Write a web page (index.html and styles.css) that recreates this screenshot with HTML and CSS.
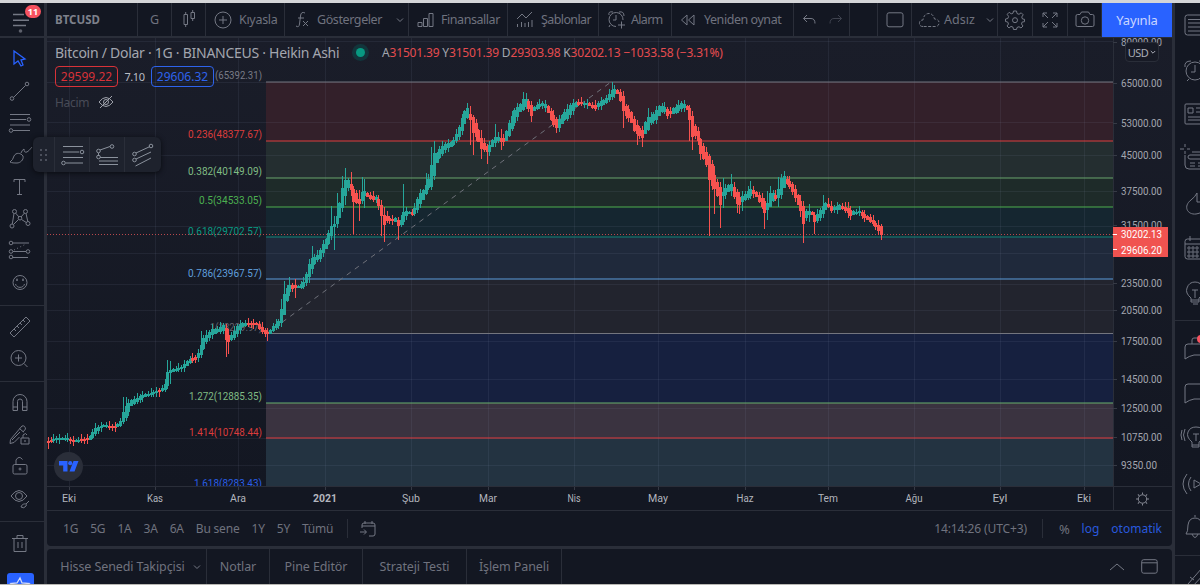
FILE: index.html
```html
<!DOCTYPE html>
<html lang="tr">
<head>
<meta charset="utf-8">
<title>BTCUSD</title>
<link rel="stylesheet" href="styles.css">
</head>
<body>
<div class="app">
  <aside class="rail">
    <div class="menu">
      <svg width="44" height="34" viewBox="0 3 44 34"><path class="thick" d="M13 14.500h11M13 20.300h16M13 25.500h13"/><circle class="dot" cx="20.500" cy="31" r="1.800"/></svg>
      <span class="badge">11</span>
    </div>
    <div class="tools first">
      <svg class="active" viewBox="0 0 28 28"><path d="M8 6v13l4-3 3 5 2-1-2-5 4-1z"/></svg>
      <svg viewBox="0 0 28 28"><path d="M7.500 20.500 19.500 8.500"/><circle cx="6" cy="21.500" r="1.800"/><circle cx="21" cy="7" r="1.800"/></svg>
      <svg viewBox="0 0 28 28"><path d="M4 5.500h20M4 10.500h16M4 16h20M7 21.500h17"/><circle cx="23" cy="10.500" r="1.800"/><circle cx="5" cy="21.500" r="1.800"/></svg>
      <svg viewBox="0 0 28 28"><path d="M4 21q3-2 4-6c2-4 7-3 9 0 1 4-3 7-6 7-3 0-5 0-7-1zM15 12q1-3 3-4 0 4 3 3 2-1 5-5"/></svg>
      <svg viewBox="0 0 28 28"><path d="M8 9V6.500h11V9M13.500 6.500V21.500M11 21.500h5"/></svg>
      <svg viewBox="0 0 28 28"><path d="M6.300 19 8 8.500M9.500 8l3.500 4M15 12l3.500-4M20 8.500 21.800 16.500M7.500 19.500l5-5M15.500 14.500l4.800 3"/><circle cx="6" cy="21" r="2"/><circle cx="8.500" cy="6.500" r="2"/><circle cx="14" cy="13.200" r="1.800"/><circle cx="19.500" cy="6.500" r="2"/><circle cx="22" cy="18.500" r="2"/></svg>
      <svg viewBox="0 0 28 28"><path d="M7 6h16M7 14.500h13M7 20.500h15"/><path stroke-dasharray="1 2.500" d="M8 13 20 7"/><circle cx="5" cy="6" r="1.800"/><circle cx="5" cy="14.500" r="1.800"/><circle cx="22" cy="14.500" r="1.800"/><circle cx="5" cy="20" r="1.800"/></svg>
      <svg viewBox="0 0 28 28"><circle cx="14" cy="13.500" r="7"/><path d="M9.500 15c1 4.500 8 4.500 9 0M11 9.500v2.500M17 9.500v2.500M10 11h2M16 11h2"/></svg>
    </div>
    <div class="tools second">
      <svg viewBox="0 0 28 28"><path d="m4 20 16-16 4 4L8 24zM8 16l2 2M11 13l2 2M14 10l2 2M17 7l2 2"/></svg>
      <svg viewBox="0 0 28 28"><circle cx="12.500" cy="13" r="7.500"/><path d="M9 13h7M12.500 9.500v7M18 18.500l3.500 3.500"/></svg>
    </div>
    <div class="tools third">
      <svg viewBox="0 0 28 28"><path d="M7 21.500v-9a7 7 0 0 1 14 0v9h-4.500v-9a2.500 2.500 0 0 0-5 0v9zM7 18h4.500M16.500 18H21"/></svg>
      <svg viewBox="0 0 28 28"><path d="M13.500 16 8 21.500l-4 1 .5-4L16 5q3-1 3.500 3L17 11M13.500 7.500l4 3.500M6 19l8-8M15 17h8v6h-8zM17 17v-3q3-3 4 0"/><circle cx="19" cy="20" r=".5"/></svg>
      <svg viewBox="0 0 28 28"><path d="M8.500 11.500h11q1.500 0 1.500 1.500v6.500q0 1.500-1.500 1.500h-11Q7 21 7 19.500V13q0-1.500 1.500-1.500zM10 11.500V7q3-5 6.500-.5"/><circle cx="14" cy="16" r="1"/></svg>
      <svg viewBox="0 0 28 28"><path d="M5 11q8-11 16 0q-8 11-16 0zM15 22c1-4 7-4 5-1q-2 3-5 1M20 19l3-3"/><circle cx="13" cy="11" r="3.500"/></svg>
    </div>
    <div class="tools fourth">
      <svg viewBox="0 0 28 28"><path d="M6 8.500h16M11 8V5.500h6V8M8 8.500v13h12v-13M12 12v6M16 12v6"/></svg>
    </div>
    <div class="star"><svg width="26" height="24" viewBox="0 0 26 24"><path d="m13 5 2 5 7 .5-5 4 2 6-6-3-6 3 2-6-5-4 6-.5z"/></svg></div>
  </aside>

  <main class="main">
    <header class="topbar">
      <div class="cell w91 symbol">BTCUSD</div>
      <div class="cell w34 mid">G</div>
      <div class="cell w34 mid"><svg width="18" height="22" viewBox="0 0 18 22"><path d="M4 5.500h3.500v10H4zM5.700 3v2.500M5.700 15.500V18M11 3.500h3.500v6H11zM12.700 1v2.500M12.700 9.500V12"/></svg></div>
      <div class="cell w79"><svg width="18" height="18" viewBox="0 0 18 18"><circle cx="9" cy="9" r="8"/><path d="M5 9h8M9 5v8"/></svg><span class="t-compare">Kıyasla</span></div>
      <div class="cell w124 ind"><svg width="16" height="20" viewBox="0 0 16 20"><path d="M10 3Q6 1 5.500 6L4.500 14Q4 18 1 16M3 8h6M8 11l5 5M13 11l-5 5"/></svg><span class="t-ind">Göstergeler</span><svg class="chev" width="8" height="6" viewBox="0 0 8 6"><path d="m1 1.500 3 3 3-3"/></svg></div>
      <div class="cell w99"><svg width="18" height="16" viewBox="0 0 18 16"><path d="M1 10.500h4v4H1zM6.500 6.500h4v8h-4zM12 1.500h4v13h-4z"/></svg><span class="t-fin">Finansallar</span></div>
      <div class="cell w91"><svg width="18" height="18" viewBox="0 0 18 18"><path d="m1 8 5-5 4 4 6-6M1.500 13v3M5.500 11v5M9 12v4M12.500 11v5M16 9v7"/></svg><span class="t-tpl">Şablonlar</span></div>
      <div class="cell w73"><svg width="20" height="20" viewBox="0 0 20 20"><path d="M9 16.500A7 7 0 1 1 16 10M9 5v5H6M2 5q-1-4 4-3M12 2q5-1 5 4M3 15l-1 2M14.500 11.500v7M11 15h7"/></svg><span class="t-alarm">Alarm</span></div>
      <div class="cell w122"><svg width="16" height="14" viewBox="0 0 16 14"><path d="M7 2v10L1.500 7zM14 2v10L8.500 7z"/></svg><span class="t-replay">Yeniden oynat</span></div>
      <div class="cell w56"><svg width="14" height="12" viewBox="0 0 14 12"><path d="M5 1 1.500 4.500 5 8M1.500 4.500H9q4 0 4 5"/></svg><svg class="redo" width="14" height="12" viewBox="0 0 14 12"><path d="M9 1l3.500 3.500L9 8M12.500 4.500H5q-4 0-4 5"/></svg></div>
      <div class="cell w28"></div>
      <div class="cell w34 mid"><svg width="18" height="16" viewBox="0 0 18 16"><rect x="1" y=".8" width="16" height="14" rx="2"/></svg></div>
      <div class="cell w86 cloud"><svg width="22" height="16" viewBox="0 0 22 16"><path stroke-dasharray="3 1.500" d="M5 14.500Q1 14.500 1.500 10.500 2 8 5 8 6 1.500 11 1.500q4 0 5.500 5.500 5 .5 4.500 4.500-.5 3-4 3z"/></svg><span class="t-name">Adsız</span><svg class="chev" width="8" height="6" viewBox="0 0 8 6"><path d="m1 1.500 3 3 3-3"/></svg></div>
      <div class="cell w35 mid"><svg width="20" height="20" viewBox="0 0 20 20"><path d="m8.500 1h3l.5 2.500 2 .8 2.200-1.500 2 2L16.700 7l.8 2 2 .3v2.400l-2.300.3-.7 2 1.500 2-2 2-2-1.300-2 .8-.5 2h-3L8 17.200l-2-.8L4 18l-2-2 1.500-2-.8-2-2.200-.5V9l2.300-.5.8-2L2.200 4.300l2-2 2 1.500L8 3.200z"/><circle cx="10" cy="10.200" r="2.500"/></svg></div>
      <div class="cell w35 mid"><svg width="16" height="16" viewBox="0 0 16 16"><path d="M1 5V1h4M1 1l5 5M11 1h4v4M15 1l-5 5M1 11v4h4M1 15l5-5M15 11v4h-4M15 15l-5-5"/></svg></div>
      <div class="cell w34 mid"><svg width="20" height="17" viewBox="0 0 20 17"><path d="M2.500 3.500H5L6.500 1h7L15 3.500h2.500q1.500 0 1.500 1.500v9q0 1.500-1.500 1.500h-15Q1 15.500 1 14V5q0-1.500 1.500-1.500z"/><circle cx="10" cy="9.500" r="3.700"/></svg></div>
      <div class="publish">Yayınla</div>
    </header>

    <section class="chart">
      <svg id="plot" class="plot" width="1125" height="473" viewBox="47 38 1125 473"></svg>
      <div class="legend">
        <div class="row"><span class="title">Bitcoin / Dolar · 1G · BINANCEUS · Heikin Ashi</span><span class="status"></span><span class="ohlc"><b>A</b>31501.39 <b>Y</b>31501.39 <b>D</b>29303.98 <b>K</b>30202.13 −1033.58 (−3.31%)</span></div>
        <div class="row quotes"><span class="pill sell">29599.22</span><span class="spread">7.10</span><span class="pill buy">29606.32</span></div>
        <div class="row volume"><span>Hacim</span><svg width="16" height="14" viewBox="0 0 16 14"><path d="M1 7q7-9 14 0-7 9-14 0zM2 13 14 1"/><circle cx="8" cy="7" r="2.500"/></svg></div>
      </div>
      <div class="currency">USD<svg width="6" height="5" viewBox="0 0 6 5"><path d="m.8 1 2.200 2.200L5.200 1"/></svg></div>
      <div class="floating">
        <div class="grip"><i></i><i></i><i></i><i></i><i></i><i></i></div>
        <div><svg viewBox="0 0 28 28"><path d="M5 5.500h20M5 11h16M5 16.500h20M8 22h17"/><circle cx="24" cy="11" r="1.800"/><circle cx="5.500" cy="22" r="1.800"/></svg></div>
        <div><svg viewBox="0 0 28 28"><path d="m7 9 10-3.500M5.500 12v3M7 16.500h18M6 20h19M6 23.500h19"/><circle cx="19" cy="5.500" r="1.800"/><circle cx="5.500" cy="10" r="1.800"/><circle cx="5.500" cy="16" r="1.800"/></svg></div>
        <div><svg viewBox="0 0 28 28"><path d="M7 12 21 5.500M7 18l15-7M6.500 25 22 17"/><circle cx="5.500" cy="13" r="1.800"/><circle cx="22" cy="5" r="1.800"/><circle cx="5.500" cy="19" r="1.800"/></svg></div>
      </div>
      <div class="brand"><svg width="20" height="11" viewBox="0 0 20 11"><path d="M0 0h8.500v10.500h-4.300V4.500H0zM14.500 0H19.500L15.500 10.500H10.500z"/><circle cx="11.200" cy="2.200" r="2.100"/></svg></div>
    </section>

    <div class="ranges">
      <span>1G</span><span>5G</span><span>1A</span><span>3A</span><span>6A</span><span class="ytd">Bu sene</span><span>1Y</span><span>5Y</span><span class="all">Tümü</span>
      <i class="bar after-all"></i>
      <svg width="16" height="16" viewBox="0 0 16 16"><path d="M2 7V4q0-2 2-2h9q2 0 2 2v9q0 2-2 2H9M2 5h13M5 0v3M12 0v3M0 11h6M4 8.500 6.500 11 4 13.500"/></svg>
      <span class="clock">14:14:26 (UTC+3)</span><i class="bar"></i><span class="pct">%</span><span class="blue log">log</span><span class="blue auto">otomatik</span>
    </div>

    <footer class="tabs">
      <div class="tab t1">Hisse Senedi Takipçisi<svg width="8" height="6" viewBox="0 0 8 6"><path d="m1 1.500 3 3 3-3"/></svg></div>
      <div class="tab t2">Notlar</div>
      <div class="tab t3">Pine Editör</div>
      <div class="tab t4">Strateji Testi</div>
      <div class="tab t5">İşlem Paneli</div>
      <div class="tabend"><svg width="16" height="8" viewBox="0 0 16 8"><path d="M1 7 8 1l7 6"/></svg><svg width="17" height="15" viewBox="0 0 17 15"><rect x=".7" y=".7" width="15.500" height="13.500" rx="2"/><path d="M1 3.800h15"/></svg></div>
    </footer>
  </main>

  <aside class="side">
    <div class="slots upper">
      <svg viewBox="0 0 32 32"><rect x="5" y="5" width="22" height="20" rx="2.500"/><path d="M8 9.500h16M8 13h16M8 17h16M8 21h16"/></svg>
      <svg viewBox="0 0 32 32"><circle cx="15" cy="16" r="9"/><path d="M15 10v7h-4M5 12q-1-6 6-6M19 6q7 0 6 6M9 24l-2 2"/></svg>
      <svg viewBox="0 0 32 32"><rect x="5" y="5" width="22" height="20" rx="1"/><path d="M8 9h5v5H8zM16 9h8M16 13h8M8 18h16M8 21h16"/></svg>
      <svg viewBox="0 0 32 32"><path d="M5 11v10q0 4 4 4h16M0 5h4M7 5h3M5 0v3M5 7v3M12 8h13M8 13q0-2 2-2h15M8 13q0 2 2 2h15M10 19h5M18 19h6M10 22h5M18 22h6"/></svg>
      <svg viewBox="0 0 32 32"><path d="M17 5q-2 4-6 7c-8 6-4 15 5 14s11-9 5-15M17 5v9h6"/></svg>
      <svg viewBox="0 0 32 32"><rect x="5" y="6" width="22" height="20" rx="2.500"/><path d="M5 11h20M10 3v5"/><circle cx="9" cy="15" r="1.200"/><circle cx="13" cy="15" r="1.200"/><circle cx="17" cy="15" r="1.200"/><circle cx="9" cy="19" r="1.200"/><circle cx="13" cy="19" r="1.200"/><circle cx="17" cy="19" r="1.200"/><circle cx="9" cy="23" r="1.200"/><circle cx="13" cy="23" r="1.200"/><circle cx="17" cy="23" r="1.200"/></svg>
      <svg viewBox="0 0 32 32"><path d="M11 20Q5 15 7 10q2-6 8-6t8 6q2 5-4 10v4h-8zM11 22h8M13 26h5M12 12h6M15 12v8"/></svg>
    </div>
    <div class="slots lower">
      <svg viewBox="0 0 32 32"><path d="M12 10V6q0-2 2-2h12M5 25V13q0-3 3-3h18v11H14q-5 1-9 4z"/><circle class="alert" cx="21" cy="5" r="4"/></svg>
      <svg viewBox="0 0 32 32"><path d="M5 24V8q0-3 3-3h18v15H14q-5 1-9 4z"/></svg>
      <svg viewBox="0 0 32 32"><path d="M12 19Q6 14 8 9q2-5 8-5 7 0 9 6 1 5-6 9v5h-7zM12 22h7M16 11v7M13 11h6M5 6q-3 6 0 12M2 7q-2 5 0 10"/></svg>
      <svg viewBox="0 0 32 32"><path d="M7 6q-8 10 0 20M11 9q-5 7 0 14M14 12v8l7-4z"/></svg>
      <svg viewBox="0 0 32 32"><path d="M6 22q2-2 2-9 1-7 7-7t7 7q0 7 3 9zM12 22q3 7 6 0M14 4h2"/></svg>
    </div>
    <div class="slots last"><svg viewBox="0 0 32 32"><path d="m8 24 14-16 4 4-14 15M10 17l4 3"/></svg></div>
  </aside>
</div>
<script src="chart.js"></script>
</body>
</html>
```

FILE: styles.css
```css
* { box-sizing: border-box; }
body {
  margin: 0; width: 1200px; height: 585px; overflow: hidden;
  background: #131722; color: #6f727e;
  font-family: "Noto Sans", "Open Sans", sans-serif; font-size: 12.500px;
}
svg { fill: none; stroke: #747884; stroke-width: 1; flex: none; }
.app {
  display: grid; grid-template-columns: 44px 1125px 25px; column-gap: 3px;
  width: 1200px; height: 585px; overflow: hidden;
  background: #2a2e39; border-top: 3px solid #d4d5d8; border-bottom: 1px solid #b9b8b4;
}

.rail { background: #131722; display: flex; flex-direction: column; overflow: hidden; }
.menu { position: relative; height: 35px; border-bottom: 2px solid #2a2e39; flex: none; }
.thick { stroke-width: 1.500; }
.dot { fill: #5d606b; stroke: none; }
.badge {
  position: absolute; left: 25px; top: 2px; width: 16px; height: 13px; border-radius: 7px;
  background: #f7525f; color: #fff; font-size: 9px; font-weight: 700; line-height: 13px; text-align: center;
}
.tools { display: flex; flex-direction: column; align-items: center; padding-right: 4px; flex: none; }
.tools svg { width: 28px; height: 28px; margin: 2px 0; }
.tools .active { stroke: #2962ff; stroke-width: 1.300; }
.first { padding-top: 5px; height: 267px; }
.second { border-top: 1px solid #2a2e39; padding-top: 5px; height: 76px; }
.third { border-top: 1px solid #2a2e39; padding-top: 5px; height: 140px; }
.fourth { border-top: 1px solid #2a2e39; padding-top: 6px; height: 52px; }
.star { width: 27px; height: 24px; margin-left: 7px; background: #2962ff; border-radius: 3px; flex: none; }
.star svg { stroke: #d5dcf5; stroke-width: 1.300; }

.main { display: flex; flex-direction: column; min-width: 0; }
.topbar { display: flex; height: 35px; background: #131722; border-bottom: 2px solid #2a2e39; flex: none; }
.cell { display: flex; align-items: center; gap: 8px; padding-left: 8px; border-right: 1px solid #2a2e39; white-space: nowrap; flex: none; }
.cell.mid { justify-content: center; padding: 0; }
.w91 { width: 91px; } .w34 { width: 34px; } .w79 { width: 79px; } .w124 { width: 124px; }
.w99 { width: 99px; } .w73 { width: 73px; } .w122 { width: 122px; } .w56 { width: 56px; }
.w28 { width: 28px; } .w86 { width: 86px; } .w35 { width: 35px; }
.symbol { font-weight: 700; font-size: 11.500px; color: #7d808b; }
.t-compare { margin-left: -1px; letter-spacing: -.3px; }
.ind { gap: 6px; padding-left: 10px; }
.t-ind { letter-spacing: -.4px; }
.ind .chev { margin-left: 8px; }
.t-fin { margin-left: -2px; letter-spacing: -.45px; }
.t-tpl { margin-left: -1px; letter-spacing: -.6px; }
.t-alarm { margin-left: -4px; letter-spacing: -.7px; }
.t-replay { letter-spacing: -.45px; }
.redo { opacity: .45; margin-left: 5px; }
.cloud { gap: 4px; padding-left: 6px; }
.cloud .chev { margin-left: 7px; }
.publish { flex: 1; height: 34px; background: #2962ff; color: #c9d6ff; display: flex; align-items: center; justify-content: center; font-size: 13px; letter-spacing: -.2px; }

.chart { position: relative; height: 473px; background: #131722; flex: none; }
.plot { display: block; stroke: none; font-family: Roboto, sans-serif; }
.legend { position: absolute; left: 8px; top: 4px; }
.row { display: flex; align-items: center; height: 20px; white-space: nowrap; }
.title { font-size: 14px; color: #a3a6af; width: 285px; letter-spacing: -.27px; }
.status { width: 9px; height: 9px; border-radius: 50%; background: #089981; box-shadow: 0 0 0 4px #12353b; margin: 0 17px 0 16px; }
.ohlc { color: #e54c4f; font-size: 12px; letter-spacing: -.17px; }
.ohlc b { color: #a3a6af; font-weight: 400; }
.quotes { height: 27px; margin-top: 1px; }
.pill { width: 63px; height: 21px; border: 1px solid; border-radius: 4px; text-align: center; line-height: 19px; font-size: 12px; }
.sell { color: #d83238; }
.buy { color: #2e63eb; }
.spread { color: #b9bcc4; font-size: 11px; width: 33px; text-align: center; letter-spacing: -.4px; }
.volume { gap: 9px; color: #484b57; height: 24px; font-size: 12px; letter-spacing: -.3px; }
.volume svg { stroke: #a0a3ac; }
.currency { position: absolute; left: 1078px; top: 4px; width: 34px; height: 20px; border: 1px solid #2a2e39; border-radius: 4px; background: #171a25; color: #a9acb5; font-size: 11px; letter-spacing: -.5px; display: flex; align-items: center; justify-content: center; gap: 2px; }
.currency svg { stroke: #a9acb5; }
.floating { position: absolute; left: -14px; top: 99px; width: 128px; height: 35px; border-radius: 6px; background: #1e222d; box-shadow: 0 1px 5px #090b10; display: grid; grid-template-columns: 22px 35px 35px 36px; }
.floating > div { border-right: 1px solid #2a2e39; display: flex; align-items: center; justify-content: center; }
.floating > div:last-child { border: 0; }
.floating svg { width: 28px; height: 28px; stroke: #8b929d; }
.floating .grip { display: grid; grid-template-columns: 2px 2px; gap: 3px; align-content: center; justify-content: center; }
.grip i { width: 2px; height: 2px; background: #4b4f5b; }
.brand { position: absolute; left: 7px; top: 414px; width: 29px; height: 29px; border-radius: 50%; background: #2a2e39; display: flex; align-items: center; justify-content: center; }
.brand svg { fill: #2962ff; stroke: none; }

.ranges { display: flex; align-items: center; height: 35px; background: #131722; border-radius: 0 0 4px 4px; padding: 0 10px 0 16px; gap: 12px; white-space: nowrap; font-size: 12px; letter-spacing: -.2px; flex: none; }
.bar { width: 1px; height: 19px; background: #2a2e39; }
.after-all { margin-left: 2px; }
.clock { margin-left: auto; margin-right: 3px; letter-spacing: -.1px; }
.pct { font-size: 13px; margin-left: 4px; }
.blue { color: #2959dd; letter-spacing: 0; }
.tabs { display: flex; height: 35px; margin-top: 3px; background: #131722; border-radius: 4px 4px 0 0; flex: none; font-size: 12.500px; letter-spacing: -.1px; }
.tab { border-right: 1px solid #2a2e39; display: flex; align-items: center; justify-content: center; gap: 8px; white-space: nowrap; }
.t1 { width: 160px; padding-left: 8px; } .t2 { width: 63px; } .t3 { width: 93px; } .t4 { width: 104px; } .t5 { width: 95px; }
.tabend { margin-left: auto; padding-right: 14px; display: flex; align-items: center; gap: 16px; }

.side { background: #131722; overflow: hidden; }
.slots { display: flex; flex-direction: column; padding-left: 5px; }
.slots svg { width: 32px; height: 32px; margin-bottom: 12.600px; }
.upper { height: 317px; padding-top: 7px; }
.lower { height: 235px; padding-top: 13px; border-top: 1px solid #2a2e39; }
.last { border-top: 1px solid #2a2e39; padding-top: 4px; }
.slots .alert { fill: #f7525f; stroke: none; }
```

FILE: chart.js
```javascript
const NS = 'http://www.w3.org/2000/svg';
const plot = document.getElementById('plot');
function add(tag, attrs, text) {
  const el = document.createElementNS(NS, tag);
  for (const k in attrs) el.setAttribute(k, attrs[k]);
  if (text) el.textContent = text;
  plot.appendChild(el);
  return el;
}
const rect = (x, y, w, h, fill) => add('rect', { x, y, width: w, height: h, fill });
const label = (x, y, t, fill, w, anchor, size) =>
  add('text', { x, y, fill, 'text-anchor': anchor || 'start', 'font-size': size || 11.5, textLength: w, lengthAdjust: 'spacingAndGlyphs' }, t);

// Pane background
const defs = add('defs', {});
defs.innerHTML = '<linearGradient id="bg" x1="0" y1="0" x2="0" y2="1"><stop offset="0" stop-color="#1a1d29"/><stop offset="1" stop-color="#131722"/></linearGradient>';
rect(47, 38, 1125, 448, 'url(#bg)');

// Retracement bands
[[82, 141, '#33202a'], [141, 178, '#242e30'], [178, 207.5, '#1e2b29'], [207.5, 237, '#152630'], [237, 279, '#1f293b'],
 [279, 334, '#22242e'], [334, 403, '#16203f'], [403, 438, '#3a3340'], [438, 486, '#233341']]
  .forEach(([a, b, c]) => rect(266, a, 847, b - a, c));

// Grid
const months = [['Eki', 69], ['Kas', 155], ['Ara', 238], ['2021', 325], ['Şub', 411], ['Mar', 488], ['Nis', 574], ['May', 658],
  ['Haz', 745], ['Tem', 828], ['Ağu', 914], ['Eyl', 1000], ['Eki', 1084]];
months.forEach(([, x]) => rect(x, 38, 1, 448, 'rgba(160,170,200,.09)'));
[41, 82, 122, 155, 191, 226, 253, 284, 310, 341, 379, 408, 438, 465]
  .forEach(y => rect(47, y, 1066, 1, 'rgba(160,170,200,.09)'));

// Level labels
[['(65392.31)', 78.500, '#787b86', 47], ['0.236(48377.67)', 138, '#dc3c3c', 74], ['0.382(40149.09)', 175, '#80bd84', 74],
 ['0.5(34533.05)', 204, '#4caf50', 63], ['0.618(29702.57)', 234.500, '#089981', 74], ['0.786(23967.57)', 276.500, '#5f9fdd', 74],
 ['1(18229.97)', 331, '#62656f', 52], ['1.272(12885.35)', 399.500, '#80bd84', 73], ['1.414(10748.44)', 435.500, '#dc3c3c', 73],
 ['1.618(8283.43)', 487, '#2a5fe6', 68]].forEach(([t, y, c, w]) => label(262, y, t, c, w, 'end'));

// Level lines
[[82, '#73757e'], [141, '#dc3e3e'], [178, '#69a46d'], [207, '#4caf50'], [237, '#138378'], [279, '#5b9cdc'], [333.500, '#73757e'],
 [403, '#69b06d'], [438, '#e03a3c']].forEach(([y, c]) => rect(266, y - .5, 847, 1, c));
add('path', { d: 'M266 334L611 82', stroke: '#6f717a', 'stroke-width': 1, 'stroke-dasharray': '5 5' });
add('path', { d: 'M47 234.500H1113', stroke: '#b8484c', 'stroke-width': 1, 'stroke-dasharray': '1 2' });

// Candle key points: x, body top, body bottom, direction (1 up, 0 down)
const keys = [[47,441,443,0],[50,440,443,0],[52,439,441,1],[60,438,439,1],[66,438,439,1],[69,438,440,0],[72,440,442,0],[75,440,441,1],
[85,439,440,0],[89,437,440,1],[93,431,438,1],[96,427,433,1],[100,426,428,1],[106,425,427,1],[110,426,427,0],[115,426,427,0],[118,424,427,1],[121,420,425,1],
[124,408,420,1],[127,404,416,1],[130,401,407,1],[136,398,403,1],[142,395,398,1],[150,393,395,1],[155,391,392,1],[158,390,392,0],[161,389,391,1],
[164,386,391,1],[167,372,387,1],[170,370,373,1],[175,369,371,1],[181,367,369,1],[186,362,367,1],[190,359,362,1],[194,358,360,0],[197,355,359,1],[200,347,356,1],
[203,338,350,1],[207,334,340,1],[212,329,335,1],[218,329,332,1],[223,325,331,1],[225,327,339,0],[228,334,342,0],[230,337,341,1],[233,333,339,1],[236,326,335,1],
[239,324,331,1],[243,323,326,1],[248,323,325,0],[256,323,325,0],[260,325,330,0],[264,329,334,0],[267,332,334,0],[270,330,334,1],[273,326,331,1],[278,323,326,1],[281,310,323,1],
[284,294,315,1],[287,287,300,1],[290,284,290,1],[294,285,288,0],[298,286,288,1],[304,282,287,1],[308,267,280,1],[311,258,270,1],[316,257,261,1],
[320,250,259,1],[324,242,251,1],[328,234,245,1],[331,226,237,1],[334,224,227,1],[338,212,223,1],[341,193,213,1],[344,181,200,1],[347,179,188,1],[350,183,187,0],
[353,188,202,0],[356,193,203,0],[359,199,204,0],[362,191,201,1],[365,191,195,1],[368,194,198,0],[372,196,200,0],[375,197,199,1],[378,198,205,0],[381,205,216,0],
[384,215,225,0],[387,216,220,0],[391,219,222,0],[394,218,220,1],[397,219,226,0],[400,222,225,1],[403,212,223,1],[407,211,214,1],[411,213,215,0],[414,209,215,1],[417,200,210,1],
[420,193,204,1],[424,188,198,1],[428,181,188,1],[431,166,187,1],[434,153,176,1],[437,153,162,1],[440,148,157,1],[445,144,150,1],[450,143,147,1],[454,139,145,1],[458,130,138,1],
[461,120,133,1],[464,112,125,1],[467,108,118,1],[470,114,120,0],[473,117,134,0],[477,126,138,0],[481,138,149,0],[485,145,151,0],[488,147,153,0],[490,144,151,1],
[493,138,146,1],[497,136,140,1],[500,138,142,0],[503,139,142,0],[506,131,141,1],[509,123,136,1],[513,112,126,1],[516,108,120,1],[519,106,113,1],[522,100,111,1],
[525,98,107,1],[528,101,108,0],[531,105,116,0],[534,107,111,1],[539,104,107,1],[544,103,106,1],[547,105,111,0],[550,110,119,0],[553,114,125,0],[557,121,129,0],
[560,117,128,1],[563,114,121,1],[567,109,119,1],[571,103,113,1],[576,102,106,1],[580,102,104,0],[585,103,105,1],[590,103,106,0],[594,106,109,0],[598,103,107,1],
[603,100,105,1],[607,97,102,1],[610,92,99,1],[613,88,95,1],[616,90,92,0],[619,91,97,0],[622,93,109,0],[625,105,116,0],[628,109,117,0],[631,112,123,0],[634,119,131,0],
[637,126,135,0],[642,130,138,0],[645,122,134,1],[648,116,130,1],[651,117,122,1],[655,112,121,1],[659,106,116,1],[663,106,110,1],[667,109,116,0],[670,111,114,0],[673,108,114,1],
[677,106,112,1],[681,103,109,1],[684,104,108,1],[687,106,110,0],[690,108,122,0],[692,115,137,0],[695,126,136,0],[698,132,142,0],[701,141,157,0],[704,147,160,0],[707,154,168,0],
[710,157,187,0],[713,170,186,0],[716,180,193,0],[720,187,205,0],[723,192,195,1],[726,187,195,1],[730,184,190,1],[733,185,194,0],[736,191,204,0],[739,197,205,0],[743,196,201,1],
[747,192,199,1],[751,188,196,1],[754,190,193,0],[758,194,201,0],[761,197,205,0],[764,201,213,0],[767,203,210,1],[770,193,207,1],[774,193,198,1],[776,196,199,0],[779,187,198,1],[781,178,195,1],
[784,176,187,1],[787,180,183,0],[790,181,188,0],[794,187,196,0],[797,193,204,0],[800,200,208,0],[803,206,225,0],[807,213,216,1],[810,210,214,1],[813,214,216,0],[815,215,225,0],
[818,213,220,1],[821,209,217,1],[824,203,212,1],[828,204,207,0],[831,206,211,0],[835,208,210,1],[838,204,210,1],[842,206,209,0],[847,208,212,0],[850,210,216,0],[855,212,214,1],[859,211,213,1],
[863,213,217,0],[867,216,220,0],[871,218,223,0],[875,223,226,0],[878,225,231,0],[881,226,235,0]];
// Long wicks: x, high, low
const spikes = [[49,437,449],[124,397,418],[127,397,412],[158,388,397],[167,360,388],[170,361,384],[200,331,358],[213,324,336],[225,327,357],[228,329,354],[267,330,341],
[281,299,325],[284,281,315],[290,277,296],[294,279,298],[309,259,283],[311,246,274],[331,206,240],[334,216,250],[338,193,224],[341,176,212],[344,168,205],[350,172,196],[353,186,234],[358,190,221],[361,177,201],[364,179,208],
[381,200,236],[384,207,242],[398,217,240],[403,184,222],[425,173,195],[431,147,188],[434,141,178],[467,103,118],[470,106,145],[473,116,155],[481,130,159],[487,146,164],[494,124,147],[500,129,150],[522,92,108],[525,93,107],[531,101,122],[556,118,133],
[612,82,94],[622,93,128],[637,124,145],[642,130,147],[649,108,130],[692,115,150],[690,106,141],[701,140,160],[709,154,236],[714,166,214],[720,186,228],[723,178,208],[730,174,190],[732,176,196],[736,189,213],[740,192,214],[743,191,211],[751,181,195],[764,198,229],[767,191,220],[770,186,204],[779,177,207],[784,171,188],
[800,195,217],[803,206,243],[808,204,222],[815,212,234],[824,195,212],[828,198,208],[847,202,218],[859,208,216],[878,220,234],[881,224,240]];
const pitch = 2.777;
let k = 0;
for (let i = 0; i <= 300; i++) {
  const x = 881 - (300 - i) * pitch;
  if (x < 47) continue;
  while (k < keys.length - 2 && keys[k + 1][0] < x) k++;
  const a = keys[k], b = keys[k + 1], f = Math.max(0, Math.min(1, (x - a[0]) / (b[0] - a[0])));
  const top = Math.round(a[1] + (b[1] - a[1]) * f), bot = Math.max(top + 2, Math.round(a[2] + (b[2] - a[2]) * f));
  const color = (f < .5 ? a : b)[3] ? '#26a69a' : '#f7524f';
  let hi = top - (i * 7 % 5) - 1, lo = bot + (i * 11 % 5);
  spikes.forEach(s => { if (Math.abs(s[0] - x) <= pitch / 2) { hi = Math.min(hi, s[1]); lo = Math.max(lo, s[2]); } });
  const px = Math.round(x);
  rect(px - 1, top, 3, bot - top, color);
  rect(px, hi, 1, lo - hi, color);
}

// Price axis
rect(1113, 38, 1, 473, '#2a2e39');
[['80000.00', 45.500], ['65000.00', 87], ['53000.00', 127], ['45000.00', 159], ['37500.00', 195], ['31500.00', 229], ['23500.00', 287],
 ['20500.00', 314], ['17500.00', 345], ['14500.00', 383], ['12500.00', 412], ['10750.00', 441], ['9350.00', 469]].forEach(([t, y]) => {
  label(1121, y, t, '#a3a6af', t.length === 8 ? 41 : 36);
  rect(1113, Math.round(y) - 4, 4, 1, '#363a45');
});
rect(1113, 227, 55, 30, '#f05350');
label(1121, 238, '30202.13', '#fff', 41);
label(1121, 253.500, '29606.20', '#fff', 41);
rect(1113, 234, 4, 1, '#fff');
rect(1113, 249, 4, 1, '#fff');

// Time axis
rect(47, 486, 1125, 25, '#131722');
rect(47, 486, 1125, 1, '#2a2e39');
rect(47, 510, 1125, 1, '#2a2e39');
rect(1113, 486, 1, 25, '#2a2e39');
const widths = [14, 16, 16, 24, 18, 18, 13, 20, 17, 20, 17, 15, 14];
months.forEach(([t, x], i) => {
  rect(x, 487, 1, 3, '#363a45');
  label(x, 502, t, '#b2b5be', widths[i], 'middle').setAttribute('font-weight', i === 3 ? 700 : 400);
});
add('circle', { cx: 1142.500, cy: 499, r: 4.200, fill: 'none', stroke: '#858893' });
for (let i = 0; i < 8; i++) add('path', { d: 'M1142.500 494.500v-2', stroke: '#858893', transform: `rotate(${i * 45} 1142.500 499)` });
```
